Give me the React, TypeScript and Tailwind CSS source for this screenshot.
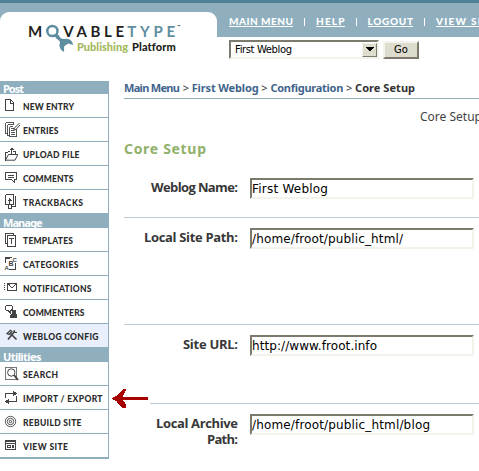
import { useLayoutEffect, useRef, useState, type ReactNode } from "react";

/* Text tracked out (or in) so that it fills a given width. */
function Fit({ w, className = "", children }: { w: number; className?: string; children: string }) {
  const ref = useRef<HTMLSpanElement>(null);
  const [spacing, setSpacing] = useState(0);
  useLayoutEffect(() => {
    const el = ref.current;
    if (!el) return;
    el.style.letterSpacing = "0px";
    const natural = el.getBoundingClientRect().width;
    const next = (w - natural) / Math.max(1, children.length - 1);
    el.style.letterSpacing = `${next}px`;
    setSpacing(next);
  }, [w, children]);
  return (
    <span ref={ref} className={`inline-block whitespace-pre ${className}`} style={{ letterSpacing: `${spacing}px`, marginRight: `${-spacing}px` }}>
      {children}
    </span>
  );
}

const icons: Record<string, ReactNode> = {
  doc: <path d="M1.5 3.5H6.5L9.5 6.5V14.5H1.5ZM6.5 3.5V7.5H9.5" />,
  entries: (
    <>
      <path d="M3.5 13.5H1.5V2.5H9.5V4M5.5 15.5H3.5V4.5H10M12.5 9V16.5H5.5V6.5H9M7 8.5H10M7 10.5H10M7 12.5H11M7 14.5H11" strokeWidth="0.9" />
      <path d="M15.5 3L10.5 8L9.8 10.2L12 9.5L16 5" shapeRendering="auto" />
    </>
  ),
  upload: (
    <>
      <path d="M1.5 16.5V8.5H3.5L4.5 7.5H6M9 7.5H11.5V10M7.5 4V10M5.5 5.5H9.5M6.5 4.5H8.5" />
      <path d="M1.5 16L4.5 10.5H13.8L11 16.2H1.5" shapeRendering="auto" />
    </>
  ),
  comments: <path d="M1.5 4.5H12.5V11.5H10.5V14.5L7.5 11.5H1.5ZM4 7.5H10M4 9.5H10" />,
  trackbacks: (
    <>
      <path d="M1.5 2.5H9.5V12.5H7.5M3.5 12.5H1.5V2.5M11.5 4V14.5H8M5.5 6V12M4.5 7.5H6.5M3.5 8.5H7.5" />
      <path d="M4.5 12.5H7.5V16.5H4.5Z" />
    </>
  ),
  templates: <path d="M3 13.5H1.5V3.5H9.5V5M3.5 5.5H11.5V16.5H3.5ZM5 8.5H10M7.5 8V14" />,
  categories: (
    <>
      <path d="M1.5 9V3.5H7.5M2 4.5H6M5 15.5H11.5V9" />
      <g stroke="none" fill="#444" fontFamily="Liberation Sans" fontWeight="700" fontSize="6">
        <text x="0.5" y="16">A</text>
        <text x="4.5" y="12" fontSize="7">B</text>
        <text x="8.5" y="7.5" fontSize="6">C</text>
      </g>
    </>
  ),
  mail: <path d="M3.5 5.5H12.5V12.5H3.5ZM4 6.5H5L7.5 9.5H8.5L11.5 6.5M0 5.5H1M0 7.5H1M0 9.5H1M0 11.5H1" />,
  commenters: (
    <>
      <path d="M2.5 3.5H7.5L8.5 4.5V7.5L6.5 8.5V11L4 8.5H2.5L1.5 7.5V4.5Z" />
      <path d="M8 8H12V12H13V16H6V13L8 12Z" fill="#444" stroke="none" />
    </>
  ),
  tools: (
    <g shapeRendering="auto">
      <path d="M4 13.5L10.5 5.5M12.5 13.5L6 7" strokeWidth="1.7" />
      <path d="M3 7.5L6.5 4.3L8 5.5L5 8.5ZM10 4L11 6.5L13 6.5" strokeWidth="1.2" />
    </g>
  ),
  search: (
    <>
      <path d="M1.5 3.5H12.5V15.5H1.5Z" stroke="#777" />
      <g shapeRendering="auto">
        <circle cx="7.3" cy="8.5" r="3.7" />
        <path d="M10 11L14 16" strokeWidth="2" />
      </g>
    </>
  ),
  swap: (
    <>
      <path d="M1.5 10V5.5H10M12.5 8V13.5H4" />
      <path d="M9 2.5L13 5.5L9 8.5ZM5 10.5L1 13.5L5 16.5Z" fill="#444" stroke="none" />
    </>
  ),
  rebuild: (
    <g shapeRendering="auto" strokeWidth="0.9">
      <circle cx="6.5" cy="9.5" r="5.2" />
      <circle cx="6.5" cy="9.5" r="3.2" />
      <circle cx="6.5" cy="9.5" r="1.2" />
    </g>
  ),
  view: <path d="M1.5 4.5H11.5V13.5H1.5ZM2 5.5H11M2 7.5H11M3.5 9.5H6.5V11.5H3.5ZM8.5 9V12M9.5 9V12" />,
};

type Item = [icon: string, label: string, width: number];
const sections: { title: string; titleWidth: number; head: string; items: Item[] }[] = [
  {
    title: "Post",
    titleWidth: 21,
    head: "h-[13px]",
    items: [
      ["doc", "NEW ENTRY", 51],
      ["entries", "ENTRIES", 35.5],
      ["upload", "UPLOAD FILE", 56.5],
      ["comments", "COMMENTS", 50.5],
      ["trackbacks", "TRACKBACKS", 60],
    ],
  },
  {
    title: "Manage",
    titleWidth: 39.5,
    head: "h-[14px]",
    items: [
      ["templates", "TEMPLATES", 50],
      ["categories", "CATEGORIES", 55.5],
      ["mail", "NOTIFICATIONS", 68.5],
      ["commenters", "COMMENTERS", 61.5],
      ["tools", "WEBLOG CONFIG", 75.5],
    ],
  },
  {
    title: "Utilities",
    titleWidth: 38.5,
    head: "h-[14px]",
    items: [
      ["search", "SEARCH", 35],
      ["swap", "IMPORT / EXPORT", 79.5],
      ["rebuild", "REBUILD SITE", 58.5],
      ["view", "VIEW SITE", 45],
    ],
  },
];

function Sidebar() {
  return (
    <nav className="mt-[44px] h-[378px] w-[109px] shrink-0 border-r border-b-2 border-[#8fafbe]">
      {sections.map((s) => (
        <section key={s.title}>
          <h2 className={`${s.head} flex items-end bg-[#8fafbe] pl-[3px] font-['Noto_Sans',sans-serif] text-[11px] leading-[11px] font-bold text-white`}>
            <Fit w={s.titleWidth}>{s.title}</Fit>
          </h2>
          {s.items.map(([icon, label, w]) => (
            <div
              key={label}
              className={`flex h-6 border-b border-[#8fafbe] pl-1 ${icon === "tools" ? "bg-[#e9effd]" : "bg-white"}`}
            >
              <svg width="19" height="18" className="mt-[2px] shrink-0" fill="none" stroke="#444" shapeRendering="crispEdges">
                {icons[icon]}
              </svg>
              <Fit w={w} className="pt-[2px] font-[Lato,sans-serif] text-[8.5px] leading-[22px] font-black text-[#2b2b2b]">
                {label}
              </Fit>
            </div>
          ))}
        </section>
      ))}
    </nav>
  );
}

function Logo() {
  return (
    <div className="relative h-[37px] w-[217px] shrink-0 pt-3">
      <div className="h-[25px] rounded-t-[9px] bg-white" />
      <div className="absolute top-[22px] left-[28px] flex font-[Lato,sans-serif] text-[15px] leading-[18px] font-bold text-[#231f20]">
        <Fit w={14}>M</Fit>
        <span className="w-[21px]" />
        <Fit w={61}>VABLE</Fit>
        <span className="w-[3px]" />
        <Fit w={48} className="text-[#5e8d9f]">TYPE</Fit>
        <span className="ml-[2px] text-[4px] leading-[9px]">™</span>
      </div>
      <svg className="absolute top-[24px] left-[44px]" width="31" height="29" fill="none">
        <circle cx="8.4" cy="7" r="5.1" stroke="#5e8d9f" strokeWidth="2.5" />
        <path
          d="M10 11L13 9.5L15 11.5C16.2 14.8 18.2 15.2 22 14.7C26 14.8 29 17.5 29 21L24.2 19.4L20.2 22.3L20 27.8C16.5 26.4 14.5 22.5 16 18.5C16 16.5 13.5 15.7 12.3 14.5Z"
          fill="#5e8d9f"
        />
      </svg>
      <div className="absolute top-[40px] left-[77px] flex font-[Lato,sans-serif] text-[11px] leading-[14px] font-black">
        <Fit w={51} className="text-[#a4b95b]">Publishing</Fit>
        <span className="w-[4px]" />
        <Fit w={43.5} className="text-[#231f20]">Platform</Fit>
      </div>
    </div>
  );
}

function TopLink({ w, children }: { w: number; children: string }) {
  return (
    <a className="flex h-[12px] shrink-0 border-b border-white">
      <Fit w={w} className="leading-[12px]">{children}</Fit>
    </a>
  );
}

function Bar() {
  return <span className="mx-[11px] mt-[3px] h-[8px] w-px shrink-0 bg-white" />;
}

function Field({ label, widths, value, valueWidth, className }: { label: string[]; widths: number[]; value: string; valueWidth: number; className: string }) {
  return (
    <div className={`flex items-start ${className}`}>
      <div className="flex w-[114px] shrink-0 flex-col items-end pt-px font-['Open_Sans',sans-serif] text-[13px] leading-4 font-bold text-[#383838]">
        {label.map((l, i) => (
          <Fit key={l} w={widths[i]}>{l}</Fit>
        ))}
      </div>
      <div className="ml-3 h-[21px] w-[224px] border-2 border-t-[#7b7a6d] border-r-[#f3f3ec] border-b-[#f3f3ec] border-l-[#7b7a6d] bg-white font-['DejaVu_Sans',sans-serif] text-[12px] leading-[18px] text-black">
        <Fit w={valueWidth}>{value}</Fit>
      </div>
    </div>
  );
}

export default function App() {
  return (
    <div className="h-[471px] w-[479px] overflow-hidden bg-white">
      <header className="relative flex h-[37px] border-t-[3px] border-[#508096] bg-[#8fafbe]">
        <div className="-mt-[3px]">
          <Logo />
        </div>
        <div className="ml-3 flex pt-[12px] font-[Lato,sans-serif] text-[10px] font-black text-white">
          <TopLink w={64}>MAIN MENU</TopLink>
          <Bar />
          <TopLink w={28.5}>HELP</TopLink>
          <Bar />
          <TopLink w={45.5}>LOGOUT</TopLink>
          <Bar />
          <TopLink w={59}>VIEW SITE</TopLink>
        </div>
      </header>

      <div className="flex">
        <Sidebar />
        <main className="w-[370px] overflow-hidden pl-[15px]">
          <div className="flex pt-[3px] pl-[105px]">
            <div className="flex h-[19px] w-[150px] shrink-0 items-center justify-between border-2 border-t-[#7b7a6d] border-r-[#f3f3ec] border-b-[#f3f3ec] border-l-[#7b7a6d] pl-1 font-['DejaVu_Sans',sans-serif] text-[10px] leading-[15px] text-black">
              <Fit w={57}>First Weblog</Fit>
              <span className="flex h-[14px] w-[15px] items-center justify-center border border-t-[#f3f3ec] border-r-[#7b7a6d] border-b-[#7b7a6d] border-l-[#f3f3ec] bg-[#dddccd]">
                <svg width="8" height="5" shapeRendering="crispEdges">
                  <path d="M0 0H8V1H7V2H6V3H5V4H3V3H2V2H1V1H0Z" />
                </svg>
              </span>
            </div>
            <div className="mt-px ml-1 h-[18px] w-[36px] shrink-0 border-2 border-t-[#f3f3ec] border-r-[#7b7a6d] border-b-[#7b7a6d] border-l-[#f3f3ec] bg-[#dddccd] text-center font-['DejaVu_Sans',sans-serif] text-[10px] leading-[14px] text-black">
              <Fit w={14}>Go</Fit>
            </div>
          </div>

          <div className="mt-[21px] flex h-[19px] border-b border-[#8fadb0] font-['Noto_Sans',sans-serif] text-[11px] leading-[16px] font-bold text-[#3f658c]">
            <Fit w={56}>Main Menu</Fit>
            <Fit w={11.7} className="font-normal text-[#333]"> &gt; </Fit>
            <Fit w={67}>First Weblog</Fit>
            <Fit w={11.7} className="font-normal text-[#333]"> &gt; </Fit>
            <Fit w={73}>Configuration</Fit>
            <Fit w={11.7} className="font-normal text-[#333]"> &gt; </Fit>
            <Fit w={60} className="text-[#333]">Core Setup</Fit>
          </div>

          <div className="mt-[10px] ml-[296px] font-['Noto_Sans',sans-serif] text-[12px] leading-[16px] text-[#444]">
            <Fit w={62}>Core Setup</Fit>
          </div>
          <h1 className="mt-[14px] h-5 font-['Noto_Sans',sans-serif] text-[14px] leading-5 font-bold text-[#91b16b]">
            <Fit w={82}>Core Setup</Fit>
          </h1>

          <Field className="mt-[19px] h-[39px]" label={["Weblog Name:"]} widths={[87]} value="First Weblog" valueWidth={76} />
          <Field className="h-[107px] border-t border-[#bdcdd8] pt-[10px]" label={["Local Site Path:"]} widths={[94]} value="/home/froot/public_html/" valueWidth={151} />
          <Field className="h-[79px] border-t border-[#bdcdd8] pt-[10px]" label={["Site URL:"]} widths={[55]} value="http://www.froot.info" valueWidth={125} />
          <div className="relative">
            <div className="ml-[26px] h-px bg-[#bdcdd8]" />
            <svg className="absolute -top-[14px] -left-[12px]" width="37" height="20" shapeRendering="crispEdges">
              <path d="M0 9H1V8H3V7H5V6H6V5H7V4H8V3H9V2H10V1H11V0H14V2H13V4H12V6H11V8H36V11H11V12H12V13H13V15H14V19H10V18H9V17H8V16H7V15H6V14H5V12H3V11H1V10H0Z" fill="#a80000" />
            </svg>
          </div>
          <Field className="h-[67px] pt-[10px]" label={["Local Archive", "Path:"]} widths={[82, 31]} value="/home/froot/public_html/blog" valueWidth={178} />
        </main>
      </div>
    </div>
  );
}
